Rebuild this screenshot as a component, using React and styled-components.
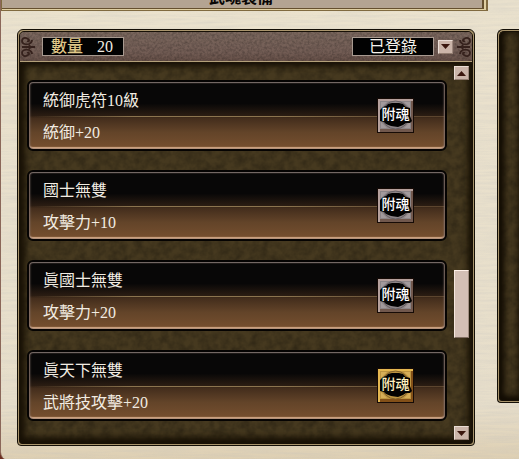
// App.jsx
import React from 'react';
import styled, { createGlobalStyle } from 'styled-components';

const noise = (frequency, color, alpha) => {
  const svg = `<svg xmlns='http://www.w3.org/2000/svg' width='240' height='240'><filter id='n' x='0' y='0' width='100%' height='100%'><feTurbulence type='fractalNoise' baseFrequency='${frequency}' numOctaves='3' stitchTiles='stitch'/><feColorMatrix values='0 0 0 0 ${color} 0 0 0 0 ${color} 0 0 0 0 ${color} ${alpha} 0 0 0 -0.15'/></filter><rect width='240' height='240' filter='url(#n)'/></svg>`;
  return `url("data:image/svg+xml,${encodeURIComponent(svg)}")`;
};

const paperNoise = noise('0.02 0.4', 0.5, 0.45);
const stoneNoise = noise('0.12', 0, 0.5);
const grainNoise = noise('0.4', 0, 0.45);

const GlobalStyle = createGlobalStyle`
  * {
    box-sizing: border-box;
  }

  body {
    margin: 0;
    overflow: hidden;
    background: #6d2f20;
    color: #f2ece2;
    font-family: 'Liberation Serif', 'Noto Sans CJK TC', serif;
    font-size: 16px;
    line-height: 20px;
  }

  button,
  select {
    margin: 0;
    padding: 0;
    font: inherit;
    cursor: pointer;
  }
`;

const Page = styled.div`
  min-height: 100vh;
  border-left: 1px solid #8b6759;
  border-bottom-left-radius: 8px;
  background: ${paperNoise}, linear-gradient(#ebe2cd, #e7deca 88%, #decfb2);
  overflow: hidden;
`;

const TitleBar = styled.header`
  display: flex;
  align-items: flex-end;
  justify-content: center;
  height: 11px;
  margin-right: 31px;
  padding: 0 6px 2px 0;
  border: solid #806a40;
  border-width: 0 2px 1px 1px;
  box-shadow: inset -2px -1px #e0cfa1, inset -4px -2px #66502e;
  background: #b4a492;
  overflow: hidden;
`;

const Title = styled.h1`
  flex: none;
  margin: 0;
  color: #080605;
  font-size: 16px;
  font-weight: 700;
  line-height: 20px;
`;

const Content = styled.div`
  display: flex;
  align-items: flex-start;
  gap: 22px;
  padding: 18px 0 14px 16px;
`;

const Frame = styled.section`
  border: 1px solid #140f07;
  border-radius: 6px 6px 4px 4px;
  background: #a8946c;
  padding: 1px;
`;

const Inner = styled.div`
  border: 1px solid #171006;
  border-radius: 5px 5px 3px 3px;
  background: ${stoneNoise}, #46391f;
  overflow: hidden;
`;

const MainFrame = styled(Frame)`
  flex: 1;
  min-width: 0;
`;

const SideFrame = styled(Frame)`
  flex: none;
  width: 22px;
  border-right: 0;
  border-radius: 6px 0 0 4px;
  padding-right: 0;
`;

const SideInner = styled(Inner)`
  height: 370px;
  border-right: 0;
  border-radius: 5px 0 0 3px;
  box-shadow: inset 4px 0 6px #120c03, inset 0 -4px 6px #120c03;
`;

const Toolbar = styled.div`
  display: flex;
  align-items: center;
  height: 30px;
  padding: 0 1px;
  border-bottom: 1px solid #b3a07a;
  background: ${grainNoise}, linear-gradient(#7a675d, #735d55 70%, #654f47);
`;

const Ornament = styled.svg`
  flex: none;
  width: 16px;
  height: 22px;
  transform: ${(props) => (props.$flip ? 'scaleX(-1)' : 'none')};
`;

const CountBox = styled.div`
  display: flex;
  gap: 14px;
  width: 82px;
  height: 19px;
  margin-left: 5px;
  padding-left: 8px;
  border: 1px solid #a89a90;
  background: #020202;
  line-height: 17px;
`;

const CountLabel = styled.span`
  color: #e0c888;
  font-weight: 500;
`;

const StatusSelect = styled.select`
  width: 82px;
  height: 19px;
  margin-left: auto;
  border: 1px solid #a89a90;
  border-radius: 0;
  background: #020202;
  color: #f6f2ec;
  line-height: 17px;
  text-align: center;
  text-align-last: center;
  appearance: none;
`;

const ArrowButton = styled.button`
  display: flex;
  flex: none;
  align-items: center;
  justify-content: center;
  width: 15px;
  height: 14px;
  border: 1px solid;
  border-color: #eaddd5 #9c877c #927d70 #eaddd5;
  border-radius: 0;
  background: #cbb5a9;
`;

const SelectArrow = styled(ArrowButton)`
  margin: 0 2px 0 4px;
`;

const Body = styled.div`
  display: flex;
  gap: 7px;
  padding: 2px 3px 3px 7px;
  border-top: 2px solid #1c1408;
  box-shadow: inset 4px 0 7px #171005, inset -3px 0 6px #171005, inset 0 -5px 8px #171005;
`;

const CardList = styled.ul`
  display: flex;
  flex: 1;
  flex-direction: column;
  gap: 19px;
  min-width: 0;
  margin: 0;
  padding: 14px 0 19px;
  list-style: none;
`;

const Card = styled.li`
  display: flex;
  align-items: center;
  justify-content: space-between;
  height: 71px;
  padding: 2px;
  border: 2px solid #050302;
  border-radius: 6px;
  background:
    linear-gradient(90deg, transparent 1%, #8b744f 25% 60%, #5c452e 95%) 0 34px / 100% 1px no-repeat padding-box,
    linear-gradient(#080707 0 32%, #2a1c12 50%, #432d1c 54%, #634429 75%, #77502f) padding-box;
  box-shadow: inset 1px 0 2px #84716a, inset -1px 0 2px #84716a, inset 0 1px 1px #706a6b, inset 0 -2px 1px #dcae8b;
`;

const CardText = styled.div`
  display: flex;
  flex-direction: column;
  gap: 12px;
  padding: 2px 0 0 12px;
  white-space: nowrap;
`;

const CardLine = styled.span`
  line-height: 20px;
`;

const SoulButton = styled.button`
  display: grid;
  place-items: center;
  flex: none;
  width: 37px;
  height: 35px;
  margin-right: 29px;
  border: 1px solid #160b06;
  border-radius: 0;
  box-shadow: inset 2px 2px ${(props) => (props.$gold ? '#e5b750' : '#b5a09c')},
    inset -2px -3px ${(props) => (props.$gold ? '#835018' : '#71584d')};
  background: ${(props) => (props.$gold ? '#bd9440' : '#8c8587')};
  color: ${(props) => (props.$gold ? '#fff0bf' : '#ffffff')};
`;

const Blot = styled.svg`
  grid-area: 1 / 1;
  width: 35px;
  height: 33px;
`;

const SoulText = styled.span`
  grid-area: 1 / 1;
  z-index: 1;
  padding-bottom: 2px;
  font-size: 14px;
  font-weight: 500;
  line-height: 16px;
`;

const ScrollColumn = styled.div`
  display: flex;
  flex: none;
  flex-direction: column;
  width: 15px;
`;

const Track = styled.div`
  display: flex;
  flex: 1;
  flex-direction: column;
`;

const TrackSpace = styled.div`
  flex: ${(props) => props.$grow} 0 0;
`;

const Thumb = styled.div`
  height: 68px;
  border: 1px solid;
  border-color: #fff1e9 #a18e82 #7e6c60 #f5e7df;
  background: #d3bfb5;
`;

const items = [
  { name: '統御虎符10級', effect: '統御+20' },
  { name: '國士無雙', effect: '攻擊力+10' },
  { name: '眞國士無雙', effect: '攻擊力+20' },
  { name: '眞天下無雙', effect: '武將技攻擊+20', gold: true },
];

const Arrow = ({ up }) => (
  <svg width="9" height="5" viewBox="0 0 9 5" aria-hidden="true">
    <path d={up ? 'M0 5 4.5 0 9 5Z' : 'M0 0H9L4.5 5Z'} fill="#3b170e" />
  </svg>
);

const Scrollwork = ({ flip }) => (
  <Ornament $flip={flip} viewBox="0 0 16 22" fill="none" stroke="#35211c" strokeWidth="1.8" aria-hidden="true">
    <path d="M1 11H14" />
    <path d="M8 8 10 10 15 11 10 12 8 14 7 11Z" fill="#35211c" stroke="none" />
    <path d="M6 5C8 6 9 4 7 3 4 1 1 2 1 5 1 8 5 9 8 8 10 7 11 5 11 4" />
    <path d="M6 17C8 16 9 18 7 19 4 21 1 20 1 17 1 14 5 13 8 14 10 15 11 17 11 18" />
  </Ornament>
);

const SoulBadge = ({ gold, label }) => (
  <SoulButton type="button" $gold={gold} aria-label={label}>
    <Blot viewBox="0 0 35 33" fill="none" aria-hidden="true">
      <circle cx="17.5" cy="16" r="14" stroke={gold ? '#80602a' : '#665f63'} />
      <path d="M3 3H9L3 9ZM32 3H26L32 9ZM3 29H9L3 23ZM32 29H26L32 23Z" fill={gold ? '#d6ae58' : '#a29a9c'} />
      <path
        d="M2 11 5 8 8 7 10 5 14 4 21 4 25 5 28 8 32 9 32 17 34 22 32 24 28 24 25 26 20 28 13 27 8 25 6 23 2 22Z"
        fill="#020202"
      />
    </Blot>
    <SoulText>附魂</SoulText>
  </SoulButton>
);

const App = () => {
  return (
    <>
      <GlobalStyle />
      <Page>
        <TitleBar>
          <Title>武魂裝備</Title>
        </TitleBar>
        <Content>
          <MainFrame>
            <Inner>
              <Toolbar>
                <Scrollwork />
                <CountBox>
                  <CountLabel>數量</CountLabel>
                  <span>20</span>
                </CountBox>
                <StatusSelect aria-label="已登錄" defaultValue="registered">
                  <option value="registered">已登錄</option>
                </StatusSelect>
                <SelectArrow type="button" aria-label="已登錄">
                  <Arrow />
                </SelectArrow>
                <Scrollwork flip />
              </Toolbar>
              <Body>
                <CardList>
                  {items.map((item) => (
                    <Card key={item.name}>
                      <CardText>
                        <CardLine>{item.name}</CardLine>
                        <CardLine>{item.effect}</CardLine>
                      </CardText>
                      <SoulBadge gold={item.gold} label={`附魂 ${item.name}`} />
                    </Card>
                  ))}
                </CardList>
                <ScrollColumn>
                  <ArrowButton type="button" aria-label="上">
                    <Arrow up />
                  </ArrowButton>
                  <Track>
                    <TrackSpace $grow={188} />
                    <Thumb />
                    <TrackSpace $grow={87} />
                  </Track>
                  <ArrowButton type="button" aria-label="下">
                    <Arrow />
                  </ArrowButton>
                </ScrollColumn>
              </Body>
            </Inner>
          </MainFrame>
          <SideFrame>
            <SideInner />
          </SideFrame>
        </Content>
      </Page>
    </>
  );
};

export default App;
